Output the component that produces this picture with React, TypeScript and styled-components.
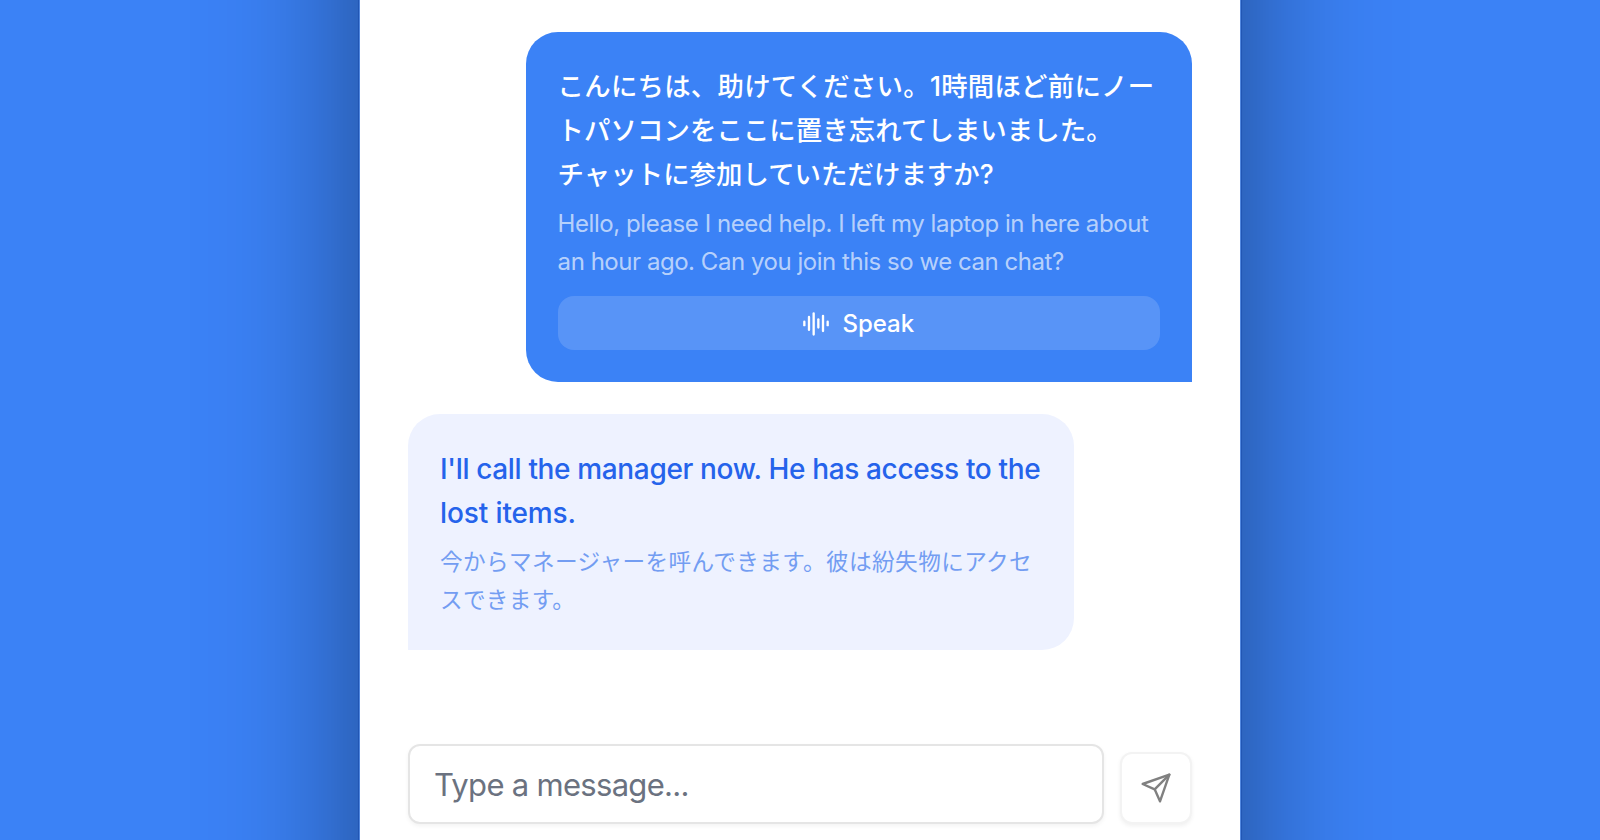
// library
import { AudioLines } from "lucide-react";
import styled, { createGlobalStyle } from 'styled-components'

interface Line {
    text : string
    spacing : number
}

interface MessageProps {
    own? : boolean
    main : Line[]
    sub : Line[]
    mainJapanese? : boolean
    speak? : boolean
}

const question : MessageProps = {
  own: true,
  speak: true,
  mainJapanese: true,
  main: [
    { text: 'こんにちは、助けてください。1時間ほど前にノー', spacing: 0.26 },
    { text: 'トパソコンをここに置き忘れてしまいました。', spacing: 0.08 },
    { text: 'チャットに参加していただけますか?', spacing: 0.06 },
  ],
  sub: [
    { text: 'Hello, please I need help. I left my laptop in here about', spacing: -0.43 },
    { text: 'an hour ago. Can you join this so we can chat?', spacing: -0.46 },
  ],
}

const answer : MessageProps = {
  main: [
    { text: "I'll call the manager now. He has access to the", spacing: -0.35 },
    { text: 'lost items.', spacing: -0.12 },
  ],
  sub: [
    { text: '今からマネージャーを呼んできます。彼は紛失物にアクセ', spacing: 0.38 },
    { text: 'スできます。', spacing: 0.3 },
  ],
}

const SendIcon = () => (
  <svg width="32" height="32" viewBox="0 0 24 24" fill="none" stroke="currentColor" strokeWidth="1.8" strokeLinecap="round" strokeLinejoin="round">
    <path d="m22 2-7 20-4-9-9-4Z" />
    <path d="M22 2 11 13" />
  </svg>
)

const Message = (props : MessageProps) => {
  return (
    <Bubble $own={props.own}>
      <MainText $own={props.own} $japanese={props.mainJapanese}>
        {props.main.map((line) => (
          <TextLine key={line.text} $spacing={line.spacing}>{line.text}</TextLine>
        ))}
      </MainText>
      <SubText $own={props.own} $japanese={!props.mainJapanese}>
        {props.sub.map((line) => (
          <TextLine key={line.text} $spacing={line.spacing}>{line.text}</TextLine>
        ))}
      </SubText>
      {props.speak && (
        <SpeakButton type="button">
          <AudioLines size={28} />
          Speak
        </SpeakButton>
      )}
    </Bubble>
  );
};

const App = () => {
  return (
    <Page>
      <GlobalStyle />
      <ChatPanel>
        <MessageList>
          <Message {...question} />
          <Message {...answer} />
        </MessageList>
        <Composer>
          <MessageInput placeholder="Type a message..." />
          <SendButton type="button" aria-label="Send">
            <SendIcon />
          </SendButton>
        </Composer>
      </ChatPanel>
    </Page>
  );
};

export default App;



const GlobalStyle = createGlobalStyle`
    * {
      box-sizing: border-box;
    }
    body {
      margin: 0;
      font-family: Inter, "Noto Sans CJK JP", sans-serif;
    }
    button, input {
      font-family: inherit;
    }
`

const Page = styled.div`
    display: flex;
    align-items: center;
    justify-content: center;
    height: 840px;
    overflow: hidden;
    background: #3b82f6;
`

// taller than the page, so the side shadows run evenly from top to bottom
const ChatPanel = styled.main`
    display: flex;
    flex-direction: column;
    flex-shrink: 0;
    justify-content: space-between;
    width: 880px;
    height: 1240px;
    padding: 232px 48px 216px;
    background: #fff;
    box-shadow: 0 0 0 1px #5288e0, 0 0 0 2px rgba(22, 72, 170, 0.5), 0 0 140px rgba(0, 0, 0, 0.45);
`

const MessageList = styled.div`
    display: flex;
    flex-direction: column;
    gap: 32px;
`

const Bubble = styled.div<{ $own? : boolean }>`
    display: flex;
    flex-direction: column;
    align-self: ${(p) => (p.$own ? 'flex-end' : 'flex-start')};
    width: 85%;
    padding: 32px;
    border-radius: ${(p) => (p.$own ? '32px 32px 0 32px' : '32px 32px 32px 0')};
    background: ${(p) => (p.$own ? '#3b82f6' : '#eef2ff')};
`

const MainText = styled.div<{ $own? : boolean, $japanese? : boolean }>`
    padding-top: ${(p) => (p.$japanese ? '0' : '1px')};
    color: ${(p) => (p.$own ? '#fff' : '#2563eb')};
    font-size: ${(p) => (p.$japanese ? '26.4px' : '28px')};
    font-weight: 500;
    line-height: 44px;
`

const SubText = styled.div<{ $own? : boolean, $japanese? : boolean }>`
    margin: ${(p) => (p.$japanese ? '8px' : '9px')} 0 -1px;
    color: ${(p) => (p.$own ? 'rgba(255, 255, 255, 0.65)' : '#739df2')};
    font-size: ${(p) => (p.$japanese ? '22.63px' : '24px')};
    line-height: 38px;
`

const TextLine = styled.span<{ $spacing : number }>`
    display: block;
    white-space: nowrap;
    letter-spacing: ${(p) => p.$spacing}px;
`

const SpeakButton = styled.button`
    display: flex;
    align-items: center;
    justify-content: center;
    gap: 12px;
    height: 54px;
    margin-top: 16px;
    padding: 1px 1px 0 0;
    border: none;
    border-radius: 16px;
    background: rgba(255, 255, 255, 0.15);
    color: #fff;
    font-size: 24px;
    font-weight: 500;
`

const Composer = styled.div`
    display: flex;
    align-items: flex-end;
    gap: 16px;
`

const MessageInput = styled.input`
    flex: 1;
    min-width: 0;
    height: 80px;
    padding: 0 24px;
    border: 2px solid #e5e5e5;
    border-radius: 12px;
    outline: none;
    background: #fff;
    box-shadow: 0 2px 4px rgba(0, 0, 0, 0.05);
    font-size: 31px;
    letter-spacing: -0.7px;

      &::placeholder {
        color: #6b7280;
        opacity: 1;
    }
`

const SendButton = styled.button`
    display: flex;
    align-items: center;
    justify-content: center;
    width: 72px;
    height: 72px;
    padding: 0;
    border: 2px solid #f3f3f3;
    border-radius: 12px;
    background: #fff;
    box-shadow: 0 2px 4px rgba(0, 0, 0, 0.06);
    color: #808080;
`
